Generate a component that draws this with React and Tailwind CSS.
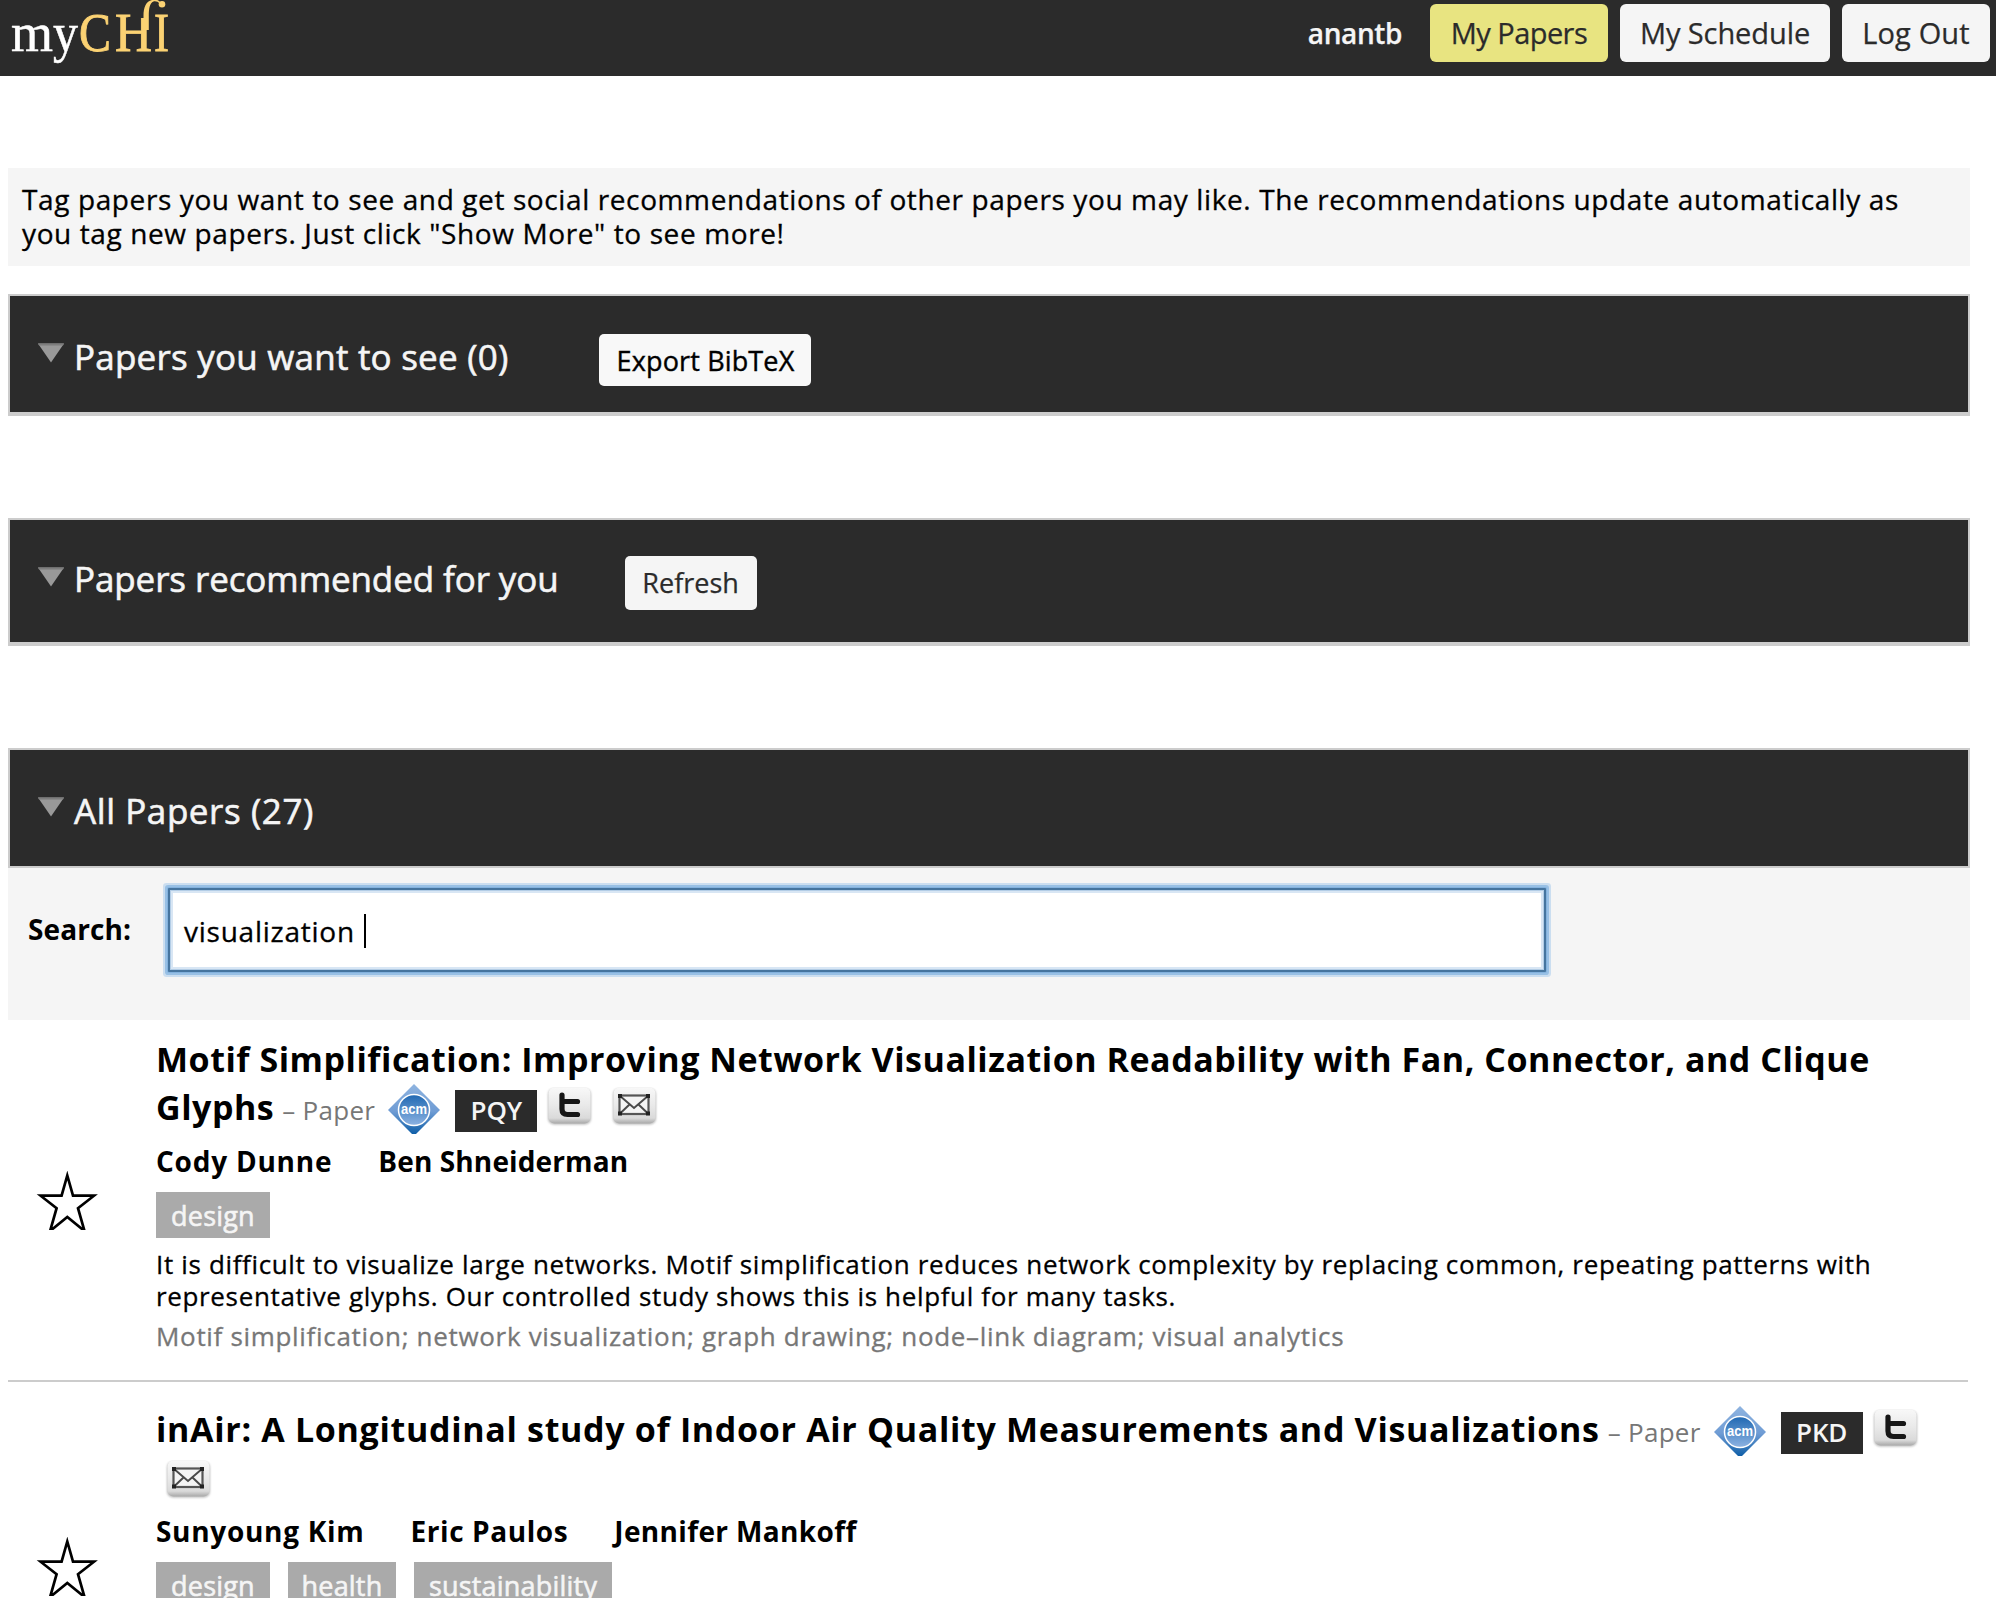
import React from 'react';

function Logo() {
  return (
    <svg
      width="180"
      height="76"
      viewBox="0 0 180 76"
      className="block"
      fontFamily='"Liberation Serif", serif'
      fontSize="54"
    >
      <g fill="#ffffff" stroke="#ffffff" strokeWidth="0.500">
        <text x="11" y="50.5" textLength="42" lengthAdjust="spacingAndGlyphs">m</text>
        <text x="53" y="50.5" textLength="25" lengthAdjust="spacingAndGlyphs">y</text>
      </g>
      <g fill="#fbd273" stroke="#fbd273" strokeWidth="0.900">
        <text x="79" y="50.5" textLength="32" lengthAdjust="spacingAndGlyphs">C</text>
        <text x="115" y="50.5" textLength="37" lengthAdjust="spacingAndGlyphs">H</text>
        <text x="154" y="50.5" textLength="15" lengthAdjust="spacingAndGlyphs">I</text>
      </g>
      <path d="M136 13H154V18H136Z" fill="#2b2b2b" />
      <path d="M143.500 30V16C143.500 7 146 1.500 152 0C156 -1 159 0 161 3L160 4C158 1.500 155.500 1 153.500 1.500C149.500 3 148.800 9 148.800 16V30Z" fill="#fbd273" />
      <circle cx="162" cy="4.300" r="3.300" fill="#fbd273" />
    </svg>
  );
}

function NavButton({ className, children }) {
  return (
    <button className={`h-[58px] rounded-[6px] text-center text-[29px] leading-[58px] text-[#2b2b2b] ${className}`}>
      {children}
    </button>
  );
}

function Triangle() {
  return (
    <svg width="28" height="20" viewBox="0 0 28 20" className="mt-[47px] ml-[27px] block shrink-0">
      <path d="M1 0.500H27L14 19.500Z" fill="#999999" />
      <path d="M1 0.500H27L26 2.500H2Z" fill="#7d7d7d" />
    </svg>
  );
}

function SectionBar({ className, titleClass, title, children }) {
  return (
    <section className={`flex items-start border-2 border-[#cccccc] bg-[#2b2b2b] ${className}`}>
      <Triangle />
      <h2 className={`ml-[9px] text-[35px] leading-[40px] font-medium whitespace-nowrap text-[#f5f5f5] [-webkit-text-stroke:0.6px] ${titleClass}`}>
        {title}
      </h2>
      {children}
    </section>
  );
}

function AcmIcon() {
  return (
    <svg width="52" height="50" viewBox="0 0 52 50" className="-mt-[4px] -mb-[4px] ml-[13px] inline-block align-[-10px]">
      <defs>
        <linearGradient id="acmDiamond" x1="0" y1="0" x2="0" y2="1">
          <stop offset="0" stopColor="#8fb4e0" />
          <stop offset="0.55" stopColor="#6f9cd4" />
          <stop offset="1" stopColor="#0f5fa8" />
        </linearGradient>
        <linearGradient id="acmDisc" x1="0" y1="0" x2="0" y2="1">
          <stop offset="0" stopColor="#1f68b2" />
          <stop offset="1" stopColor="#8db3e2" />
        </linearGradient>
      </defs>
      <path d="M26 0L52 26L28 50H24L0 26Z" fill="url(#acmDiamond)" />
      <circle cx="26" cy="26" r="15.500" fill="url(#acmDisc)" stroke="#ffffff" strokeWidth="1.500" />
      <text
        x="26"
        y="29.500"
        textAnchor="middle"
        fill="#ffffff"
        fontFamily='"Liberation Sans", sans-serif'
        fontWeight="700"
        fontSize="14"
        textLength="26"
        lengthAdjust="spacingAndGlyphs"
      >
        acm
      </text>
    </svg>
  );
}

function SquareIcon({ children }) {
  return (
    <svg width="47" height="42" viewBox="-1 0 47 42" className="mx-[9px] -mb-[4px] inline-block align-[-5px]">
      <defs>
        <linearGradient id="keyFace" x1="0" y1="0" x2="0" y2="1">
          <stop offset="0" stopColor="#f8f8f8" />
          <stop offset="0.5" stopColor="#e9e9e9" />
          <stop offset="0.85" stopColor="#dadada" />
          <stop offset="1" stopColor="#a8a8a8" />
        </linearGradient>
        <filter id="keyShade" x="-20%" y="-20%" width="140%" height="140%">
          <feGaussianBlur stdDeviation="1.200" />
        </filter>
      </defs>
      <rect x="1" y="1.500" width="43" height="36" rx="6" fill="#8c8c8c" opacity="0.600" filter="url(#keyShade)" />
      <rect x="1.500" y="0.500" width="42" height="36" rx="6" fill="url(#keyFace)" />
      {children}
    </svg>
  );
}

function TwitterIcon() {
  return (
    <SquareIcon>
      <path
        d="M15 8V22Q15 27.500 20.500 27.500H30.500M15 14.500H30.500"
        fill="none"
        stroke="#161616"
        strokeWidth="5.200"
        strokeLinecap="round"
      />
    </SquareIcon>
  );
}

function MailIcon() {
  return (
    <SquareIcon>
      <rect x="7.500" y="8.500" width="29" height="18.500" fill="#f4f4f4" stroke="#555555" strokeWidth="2.200" />
      <path d="M7.500 8.500L22 21L36.500 8.500M7.500 27L17.500 17.500M36.500 27L26.500 17.500" fill="none" stroke="#4a4a4a" strokeWidth="2" />
      <path d="M6 7H10V11H6ZM34 7H38V11H34ZM6 24.500H10V28.500H6ZM34 24.500H38V28.500H34Z" fill="#222222" />
    </SquareIcon>
  );
}

function Star({ className }) {
  return (
    <svg width="62" height="59" viewBox="0 0 62 59" className={`ml-[28px] block shrink-0 ${className}`}>
      <path
        d="M31.300 4.500L37 24.700H58L42 37.200L48.500 60L31.300 46L14.100 60L20.600 37.200L4.600 24.700H25.600Z"
        fill="#ffffff"
        stroke="#000000"
        strokeWidth="2.700"
        strokeMiterlimit="8"
      />
    </svg>
  );
}

function Paper({ className, starClass, title, titleClass, code, authors, tags, children }) {
  return (
    <article className={`flex w-[1960px] items-start ${className}`}>
      <Star className={starClass} />
      <div className="ml-[58px] w-[1804px]">
        <h3 className="h-[96px] text-[34px] leading-[48px] text-black">
          <span className={`font-bold ${titleClass}`}>{title}</span>
          <span className="ml-[8px] text-[26px] tracking-[0.28px] text-[#777777]">– Paper</span>
          <AcmIcon />
          <span className="-my-[6px] ml-[15px] inline-block h-[42px] w-[82px] bg-[#2b2b2b] text-center text-[26px] leading-[40px] font-semibold tracking-[-0.2px] text-[#f5f5f5]">
            {code}
          </span>
          <TwitterIcon />
          <MailIcon />
        </h3>
        <div className="mt-[10px] flex gap-[46px] text-[28px] leading-[40px] font-bold">
          {authors.map(([name, tracking]) => (
            <span key={name} className={tracking}>{name}</span>
          ))}
        </div>
        <div className="mt-[11px] flex gap-[18px]">
          {tags.map(([tag, width]) => (
            <span
              key={tag}
              className={`h-[46px] bg-[#aaaaaa] text-center text-[27px] leading-[47px] font-medium tracking-[0.2px] text-[#f5f5f5] [-webkit-text-stroke:0.6px] ${width}`}
            >
              {tag}
            </span>
          ))}
        </div>
        {children}
      </div>
    </article>
  );
}

export default function App() {
  return (
    <div className="h-[1598px] w-[1996px] overflow-hidden bg-white font-['Open_Sans',sans-serif] text-black">
      <header className="flex h-[76px] items-start bg-[#2b2b2b]">
        <Logo />
        <div className="mt-[4px] mr-[6px] ml-auto flex items-start gap-[12px] [-webkit-text-stroke:0.25px]">
          <span className="mr-[16px] text-[28px] leading-[59px] font-semibold tracking-[-0.4px] text-[#f5f5f5]">anantb</span>
          <NavButton className="w-[178px] bg-[#e8e481] tracking-[-0.57px]">My Papers</NavButton>
          <NavButton className="w-[210px] bg-[#f5f5f5] tracking-[-0.09px]">My Schedule</NavButton>
          <NavButton className="w-[148px] bg-[#f5f5f5] tracking-[0.13px]">Log Out</NavButton>
        </div>
      </header>

      <main className="ml-[8px] w-[1962px] pt-[92px]">
        <p className="h-[98px] bg-[#f5f5f5] pt-[14px] pl-[14px] text-[28px] leading-[34px] tracking-[0.61px] [-webkit-text-stroke:0.3px]">
          Tag papers you want to see and get social recommendations of other papers you may like. The recommendations update automatically as
          <br />
          you tag new papers. Just click "Show More" to see more!
        </p>

        <SectionBar
          className="mt-[28px] h-[122px] border-b-4"
          titleClass="mt-[41px] tracking-[0.22px]"
          title="Papers you want to see (0)"
        >
          <button className="mt-[38px] ml-[91px] h-[52px] w-[212px] rounded-[5px] bg-[#f8f8f8] text-[27px] leading-[53px] font-medium tracking-[0.14px] [-webkit-text-stroke:0.4px]">
            Export BibTeX
          </button>
        </SectionBar>

        <SectionBar
          className="mt-[102px] h-[128px] border-b-4"
          titleClass="mt-[39px] tracking-[-0.1px]"
          title="Papers recommended for you"
        >
          <button className="mt-[36px] ml-[66px] h-[54px] w-[132px] rounded-[5px] bg-[#f5f5f5] text-[27px] leading-[52px] text-[#2b2b2b] [-webkit-text-stroke:0.25px]">
            Refresh
          </button>
        </SectionBar>

        <SectionBar
          className="mt-[102px] h-[120px]"
          titleClass="mt-[41px] tracking-[0.58px]"
          title="All Papers (27)"
        />

        <div className="flex h-[152px] items-start bg-[#f5f5f5] pl-[20px]">
          <label className="mt-[41px] w-[140px] text-[28px] leading-[40px] font-bold tracking-[0.1px]">Search:</label>
          <div className="mt-[20px] flex h-[84px] w-[1378px] items-start rounded-[1px] border-2 border-[#46759f] bg-white pl-[14px] shadow-[0_0_0_1px_#83b2de,0_0_0_3px_#98c0e5,0_0_0_5px_#cbdef0,inset_0_0_0_1px_#b3cde6,inset_0_0_0_3px_#d8e6f4]">
            <span className="text-[28px] leading-[82px] tracking-[0.76px] [-webkit-text-stroke:0.3px]">visualization</span>
            <span className="mt-[24px] ml-[9px] h-[34px] w-[2px] bg-black" />
          </div>
        </div>

        <Paper
          className="h-[362px] border-b-2 border-[#cccccc] pt-[15px]"
          starClass="mt-[136px]"
          title="Motif Simplification: Improving Network Visualization Readability with Fan, Connector, and Clique Glyphs"
          titleClass="tracking-[0.53px]"
          code="PQY"
          authors={[['Cody Dunne', 'tracking-[0.77px]'], ['Ben Shneiderman', 'tracking-[0.12px]']]}
          tags={[['design', 'w-[114px]']]}
        >
          <p className="mt-[10px] text-[26px] leading-[32px] tracking-[0.65px] [-webkit-text-stroke:0.3px]">
            It is difficult to visualize large networks. Motif simplification reduces network complexity by replacing common, repeating patterns with
            <br />
            representative glyphs. Our controlled study shows this is helpful for many tasks.
          </p>
          <p className="mt-[8px] text-[26px] leading-[32px] tracking-[0.68px] text-[#777777] [-webkit-text-stroke:0.3px]">
            Motif simplification; network visualization; graph drawing; node–link diagram; visual analytics
          </p>
        </Paper>

        <Paper
          className="pt-[23px]"
          starClass="mt-[132px]"
          title="inAir: A Longitudinal study of Indoor Air Quality Measurements and Visualizations"
          titleClass="tracking-[0.68px]"
          code="PKD"
          authors={[
            ['Sunyoung Kim', 'tracking-[0.7px]'],
            ['Eric Paulos', 'tracking-[0.6px]'],
            ['Jennifer Mankoff', 'tracking-[0.35px]'],
          ]}
          tags={[['design', 'w-[114px]'], ['health', 'w-[108px]'], ['sustainability', 'w-[198px]']]}
        />
      </main>
    </div>
  );
}
